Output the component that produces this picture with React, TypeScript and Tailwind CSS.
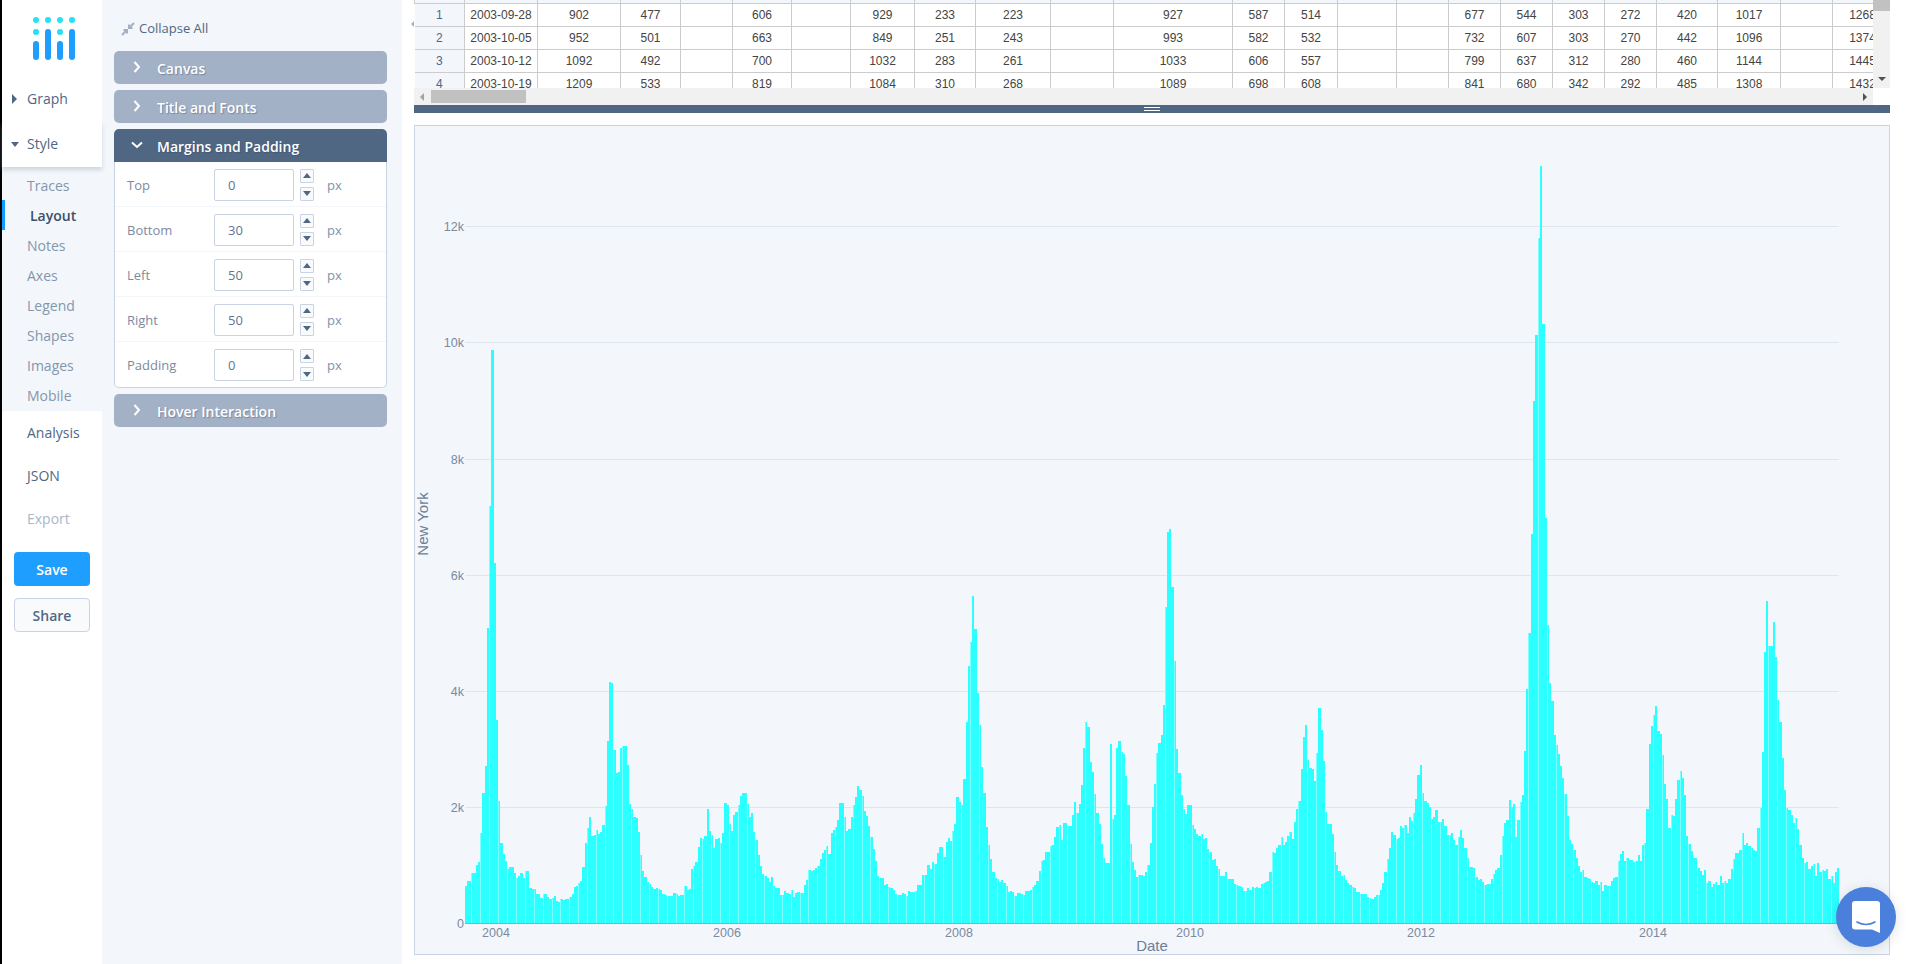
import React from "react";

const seg1 = [18,37,25,42,31,42,37,50,44,50,50,58,57,61,63,90,70,130,77,157,84,295,90.6,417,97.5,573,104.4,360,110,203,117,122,124,80,131,69,138,62,144,54,151,56,158,56,164,50,171,45,178,47,184,50,191,45,198,52,205,52,211,35,218,34,225,34,231,29,238,29,244,25,251,29,258,29,264,26,271,24,278,25,284,27,291,22,298,21,304,24,311,23,318,24,325,24,331,26,338,29,344,36,351,37,357,40,364,42,370,56,377,80,384,95,391,106,397,87,404,88,410,93,417,89,424,91,430,98,437,117,444,182,450,241,457,240,463,173,470,150,477,151,483,175,490,177,497,177,503,158,510,119,517,114,523,106,530,105,537,91,543,68,550,52,556,46,563,41,570,39,577,36,583,34,590,35,597,34,604,33,610,29,617,28,623,27,630,27,637,27,643,30,650,29,657,27,663,28,670,28,676,37,683,33,690,34,696,54,703,57,709,61,716,76,723,85,729,84,736,87,743,114,749,92,756,88,763,75,769,84,776,85,783,80,789,90,796,120,803,118,809,99,816,92,823,108,829,111,836,118,843,127,850,130,856,130,863,119,869,106,876,110,883,91,889,83,896,68,903,57,909,49,916,47,923,45,929,41,936,46,942,37,949,35,956,35,962,28,969,28,975,32,982,30,989,29,995,33,1002,26,1009,30,1015,31,1022,30,1029,30,1035,38,1042,43,1048,53,1055,52,1062,53,1068,55,1075,57,1082,64,1088,70,1095,73,1101,77,1108,69,1115,90,1121,93,1128,96,1135,103,1141,120,1148,120,1155,106,1161,92,1168,94,1175,106,1181,118,1188,126,1194,137,1201,133,1208,127,1215,112,1221,107,1228,97,1234,86,1241,74,1248,62,1254,47,1261,45,1268,45,1275,38,1281,39,1288,36,1294,35,1301,33,1308,29,1314,28,1321,28,1328,30,1334,29,1341,27,1348,32,1354,31,1361,31,1368,32,1375,38];
const seg2 = [62,38,69,48,76,48,86,58,92,54,99,61,107,59,114,70,120,76,127,76,133,66,140,81,147,85,153,82,158,92,165,99,173,126,180,121,187,118,193,144,200,201,207,257,213,281,219,327,226,294,233,230,240,198,247,156,253,130,260,96,266,78,273,64,280,51,287,45,293,44,300,41,307,43,313,40,320,37,326,31,333,32,340,31,346,27,353,30,360,30,366,29,373,28,378,32,385,32,392,33,398,36,405,38,411,42,420,52,425,62,432,63,438,71,445,71,452,77,458,78,465,86,472,96,479,98,485,83,492,100,499,100,505,97,512,97,519,108,525,121,532,110,539,119,545,138,551,175,558,201,565,196,572,161,578,151,585,129,592,110,599,99,605,79,612,65,618,60,625,60,632,179,638,104,645,108,651,175,658,182,665,171,672,169,678,147,685,118,692,79,698,61,705,53,711,46,718,48,725,48,732,47,738,51,745,58,752,80,758,116,765,139,771,170,778,180,785,188,791,218,798,316,804,391,811,394,817,336,824,262,830,174,838,150,845,128,852,114,858,109,865,118,871,118,878,98,885,94,891,89,898,87,905,89,911,84,918,85,924,74,931,71,938,63,944,64,951,57,958,54,964,47,971,47,978,51,984,44,991,44,998,44,1005,39,1011,38,1018,37,1025,36,1031,32,1038,32,1045,35,1051,33,1058,36,1065,35,1071,36,1078,35,1085,39,1091,40,1098,41,1105,42,1111,51,1118,71,1125,70,1131,75,1138,78,1145,86,1151,78,1158,81,1165,87,1171,91,1178,84,1185,101,1191,114,1198,122,1205,154,1211,186,1218,198,1225,163,1231,155,1238,154,1245,142,1251,170,1258,215,1265,193,1271,162,1278,111,1285,99,1291,99,1298,89,1305,71,1311,58,1318,52,1325,47,1331,48,1338,43,1345,40,1351,38,1358,36,1365,35,1371,31,1378,31];
const seg3 = [64,29,70,29,77,29,84,26,91,25,97,24,104,26,111,28,117,28,124,33,129,40,136,51,143,64,150,75,157,91,163,88,170,84,177,85,184,97,190,95,196,98,203,90,210,106,216,102,223,110,228,124,236,148,243,158,250,130,256,122,263,120,270,116,276,104,283,106,289,113,296,101,303,101,309,104,316,97,323,88,329,88,336,90,343,83,349,78,356,86,363,93,369,85,376,75,383,65,390,56,396,56,403,55,409,46,416,43,423,44,429,41,436,38,443,39,449,39,456,44,463,49,468,53,475,55,482,68,488,87,495,100,502,103,509,123,516,116,522,119,529,86,535,103,542,121,549,128,555,172,562,234,568,290,576,389,582,522,589,588,596,685,603,757,610,599,617,405,625,298,630,240,637,222,644,188,650,178,657,169,663,157,670,145,676,129,683,107,690,83,696,79,703,73,710,65,716,57,723,51,729,53,736,46,743,45,749,44,756,41,763,40,769,42,776,38,782,41,789,32,796,38,803,37,809,37,816,42,823,45,829,46,836,62,842,69,849,72,856,62,862,65,869,63,876,63,883,61,889,62,896,68,902,62,909,78,915,80,922,114,929,179,935,197,942,208,949,217,955,192,962,189,968,168,975,139,982,124,988,95,995,108,1002,107,1008,124,1015,143,1022,152,1029,145,1035,128,1042,87,1048,79,1055,72,1062,65,1069,65,1075,55,1082,52,1089,48,1095,53,1102,40,1108,42,1115,36,1122,39,1128,41,1135,38,1142,47,1148,40,1155,42,1162,40,1168,44,1175,54,1181,64,1188,70,1195,70,1201,73,1208,90,1215,78,1222,80,1228,77,1235,75,1242,73,1248,72,1255,95,1262,115,1268,171,1275,271,1281,322,1288,277,1295,277,1301,301,1308,266,1315,223,1321,201,1328,165,1335,133,1341,115,1348,113,1355,108,1361,100,1368,105,1375,94,1381,78,1388,65,1395,60,1401,61,1408,54,1415,57,1421,59,1428,47,1435,60,1441,51,1448,53,1455,52,1461,54,1468,44,1475,47,1481,40,1488,51,1494,55];

const points: { x: number; h: number }[] = [];
const addSeg = (origin: number, s: number[]) => {
  for (let i = 0; i < s.length; i += 2) points.push({ x: origin + s[i] / 3, h: s[i + 1] });
};
addSeg(460, seg1);
addSeg(900, seg2);
addSeg(1340, seg3);

const BASE = 923;
const bars = points.map((p, i) => {
  const l = i === 0 ? 465 : Math.round((points[i - 1].x + p.x) / 2);
  const r = i === points.length - 1 ? 1839 : Math.round((p.x + points[i + 1].x) / 2);
  return { l, r, h: p.h };
});

const yTicks = [
  { y: 923.5, t: "0" },
  { y: 807.5, t: "2k" },
  { y: 691.5, t: "4k" },
  { y: 575.5, t: "6k" },
  { y: 459.5, t: "8k" },
  { y: 342.5, t: "10k" },
  { y: 226.5, t: "12k" },
];
const xTicks = [
  { x: 496, t: "2004" },
  { x: 727, t: "2006" },
  { x: 959, t: "2008" },
  { x: 1190, t: "2010" },
  { x: 1421, t: "2012" },
  { x: 1653, t: "2014" },
];

const colWidths = [50, 73, 83, 60, 52, 59, 59, 64, 61, 75, 63, 119, 52, 53, 59, 52, 52, 52, 52, 52, 61, 63, 52, 60];
const rows = [
  ["1", "2003-09-28", "902", "477", "", "606", "", "929", "233", "223", "", "927", "587", "514", "", "", "677", "544", "303", "272", "420", "1017", "", "1268"],
  ["2", "2003-10-05", "952", "501", "", "663", "", "849", "251", "243", "", "993", "582", "532", "", "", "732", "607", "303", "270", "442", "1096", "", "1374"],
  ["3", "2003-10-12", "1092", "492", "", "700", "", "1032", "283", "261", "", "1033", "606", "557", "", "", "799", "637", "312", "280", "460", "1144", "", "1445"],
  ["4", "2003-10-19", "1209", "533", "", "819", "", "1084", "310", "268", "", "1089", "698", "608", "", "", "841", "680", "342", "292", "485", "1308", "", "1432"],
];

function Logo() {
  return (
    <svg width="48" height="48" viewBox="0 0 48 48" className="block">
      <g fill="#25e0f8">
        <circle cx="6" cy="6" r="3" />
        <circle cx="18" cy="6" r="3" />
        <circle cx="30" cy="6" r="3" />
        <circle cx="42" cy="6" r="3" />
        <circle cx="6" cy="18" r="3" />
        <circle cx="30" cy="18" r="3" />
      </g>
      <g fill="#1e9fff">
        <rect x="3" y="27" width="6" height="19" rx="3" />
        <rect x="15" y="15" width="6" height="31" rx="3" />
        <rect x="27" y="27" width="6" height="19" rx="3" />
        <rect x="39" y="15" width="6" height="31" rx="3" />
      </g>
    </svg>
  );
}

function Chevron({ open }: { open?: boolean }) {
  return (
    <svg width="12" height="12" viewBox="0 0 12 12" className="block">
      <path
        d={open ? "M1 3.5 L6 8 L11 3.5" : "M3.5 1 L8 6 L3.5 11"}
        fill="none"
        stroke="#ffffff"
        strokeWidth="2"
      />
    </svg>
  );
}

function FoldHeader({ label, open }: { label: string; open?: boolean }) {
  return (
    <div
      className={
        open
          ? "flex h-[33px] items-center rounded-t-[5px] bg-[#506784] pl-[17px]"
          : "flex h-[33px] items-center rounded-[5px] bg-[#a2b1c6] pl-[17px]"
      }
    >
      <span className="-mt-[2px] w-[26px]">
        <Chevron open={open} />
      </span>
      <span className="pt-[2px] text-[14px] font-semibold text-white [text-shadow:1px_1px_1px_rgba(40,60,90,0.35)]">{label}</span>
    </div>
  );
}

function MarginRow({ label, value, last }: { label: string; value: string; last?: boolean }) {
  return (
    <div className={last ? "flex h-[45px] items-center pl-[12px] pt-[1px]" : "flex h-[45px] items-center border-b border-[#f3f6fa] pl-[12px] pt-[1px]"}>
      <span className="mt-[2px] w-[87px] text-[13px] text-[#7d8ba0]">{label}</span>
      <div className="flex h-[32px] w-[80px] items-center rounded-[2px] border border-[#c8d4e3] bg-white pl-[13px] pt-[2px] text-[13px] text-[#5f7590]">
        {value}
      </div>
      <div className="ml-[6px] flex h-[32px] w-[14px] flex-col justify-between">
        <div className="flex h-[14px] items-center justify-center rounded-[1px] border border-[#c8d4e3] bg-[#f8fafc]">
          <div className="h-0 w-0 border-x-[4px] border-b-[5px] border-x-transparent border-b-[#506784]" />
        </div>
        <div className="flex h-[14px] items-center justify-center rounded-[1px] border border-[#c8d4e3] bg-[#f8fafc]">
          <div className="h-0 w-0 border-x-[4px] border-t-[5px] border-x-transparent border-t-[#506784]" />
        </div>
      </div>
      <span className="ml-[13px] mt-[2px] text-[13px] text-[#7d93ab]">px</span>
    </div>
  );
}

function SubItem({ label, active }: { label: string; active?: boolean }) {
  return active ? (
    <div className="flex h-[30px] items-center border-l-[3px] border-[#119dff] pl-[25px] text-[14px] font-semibold text-[#3b5068]">{label}</div>
  ) : (
    <div className="flex h-[30px] items-center pl-[25px] text-[14px] text-[#8496ac]">{label}</div>
  );
}

export default function App() {
  return (
    <div className="relative flex h-[964px] w-[1906px] overflow-hidden bg-white font-['Open_Sans',sans-serif]">
      <div className="w-[2px] shrink-0 bg-black" />

      <nav className="flex w-[100px] shrink-0 flex-col bg-white">
        <div className="h-[77px] pl-[28px] pt-[14px]">
          <Logo />
        </div>
        <div className="flex h-[45px] items-center pb-[2px] pl-[10px] text-[14px] text-[#506784]">
          <div className="mr-[10px] h-0 w-0 border-y-[5px] border-l-[5px] border-y-transparent border-l-[#506784]" />
          Graph
        </div>
        <div className="relative z-10 flex h-[45px] items-center pb-[2px] pl-[9px] text-[14px] text-[#506784] shadow-[0_3px_4px_rgba(160,175,195,0.45)]">
          <div className="mr-[8px] mt-[1px] h-0 w-0 border-x-[4.5px] border-t-[5px] border-x-transparent border-t-[#506784]" />
          Style
        </div>
        <div className="flex h-[244px] flex-col bg-[#f3f6fa] pt-[3px]">
          <SubItem label="Traces" />
          <SubItem label="Layout" active />
          <SubItem label="Notes" />
          <SubItem label="Axes" />
          <SubItem label="Legend" />
          <SubItem label="Shapes" />
          <SubItem label="Images" />
          <SubItem label="Mobile" />
        </div>
        <div className="flex h-[43px] items-center pl-[25px] text-[14px] text-[#506784]">Analysis</div>
        <div className="flex h-[43px] items-center pl-[25px] text-[14px] text-[#506784]">JSON</div>
        <div className="flex h-[43px] items-center pl-[25px] text-[14px] text-[#a9b7ca]">Export</div>
        <div className="mx-[12px] mt-[12px] flex h-[34px] w-[76px] items-center justify-center rounded-[4px] bg-[#1e9fff] text-[14px] font-semibold text-white">Save</div>
        <div className="mx-[12px] mt-[12px] flex h-[34px] w-[76px] items-center justify-center rounded-[4px] border border-[#c8d4e3] bg-[#f8fafc] text-[14px] font-semibold text-[#506784]">Share</div>
      </nav>

      <aside className="w-[300px] shrink-0 bg-[#f3f6fa] pl-[12px] pr-[15px]">
        <div className="flex h-[51px] items-center pl-[7px] pt-[6px] text-[13px] text-[#506784]">
          <svg width="14" height="14" viewBox="0 0 14 14" className="mr-[4px]">
            <path d="M13 1 L8.5 5.5 M8 2.5 V6 H11.5 M1 13 L5.5 8.5 M6 11.5 V8 H2.5" fill="none" stroke="#a2b1c6" strokeWidth="2" />
          </svg>
          Collapse All
        </div>
        <div className="flex flex-col gap-[6px]">
          <FoldHeader label="Canvas" />
          <FoldHeader label="Title and Fonts" />
          <div>
            <FoldHeader label="Margins and Padding" open />
            <div className="rounded-b-[5px] border border-t-0 border-[#c8d4e3] bg-white">
              <MarginRow label="Top" value="0" />
              <MarginRow label="Bottom" value="30" />
              <MarginRow label="Left" value="50" />
              <MarginRow label="Right" value="50" />
              <MarginRow label="Padding" value="0" last />
            </div>
          </div>
          <FoldHeader label="Hover Interaction" />
        </div>
      </aside>

      <main className="flex min-w-0 flex-1 flex-col pl-[12px] pr-[16px]">
        <div className="flex h-[105px] shrink-0">
          <div className="flex w-[1459px] shrink-0 flex-col">
            <div className="h-[88px] overflow-hidden">
              <table className="w-[1478px] table-fixed border-collapse font-['Liberation_Sans',sans-serif] text-[12px] text-[#444444]">
                <colgroup>
                  {colWidths.map((w, i) => (
                    <col key={i} style={{ width: w }} />
                  ))}
                </colgroup>
                <tbody>
                  <tr className="h-[3px] bg-[#f3f6fa]">
                    {colWidths.map((_, i) => (
                      <td key={i} className="border border-t-0 border-[#cccccc] p-0" />
                    ))}
                  </tr>
                  {rows.map((r) => (
                    <tr key={r[0]} className="h-[23px]">
                      {r.map((c, i) => (
                        <td
                          key={i}
                          className={
                            i === 0
                              ? "overflow-hidden border border-l-0 border-[#cccccc] bg-[#f3f6fa] p-0 text-center text-[#506784]"
                              : "overflow-hidden border border-[#cccccc] p-0 text-center"
                          }
                        >
                          {c}
                        </td>
                      ))}
                    </tr>
                  ))}
                </tbody>
              </table>
            </div>
            <div className="flex h-[17px] items-center bg-[#f1f1f1] pl-[6px]">
              <div className="h-0 w-0 border-y-[4px] border-r-[4px] border-y-transparent border-r-[#a3a3a3]" />
              <div className="ml-[7px] h-[13px] w-[95px] bg-[#c1c1c1]" />
              <div className="ml-auto mr-[6px] h-0 w-0 border-y-[4px] border-l-[4px] border-y-transparent border-l-[#505050]" />
            </div>
          </div>
          <div className="flex w-[17px] shrink-0 flex-col">
            <div className="relative h-[88px] bg-[#f1f1f1]">
              <div className="h-[11px] bg-[#c1c1c1]" />
              <div className="absolute bottom-[7px] left-[5px] h-0 w-0 border-x-[4px] border-t-[4px] border-x-transparent border-t-[#505050]" />
            </div>
          </div>
        </div>

        <div className="flex h-[8px] shrink-0 flex-col items-center justify-center gap-[1.5px] bg-[#506784]">
          <div className="h-px w-[16px] bg-white" />
          <div className="h-px w-[16px] bg-white" />
        </div>

        <div className="mt-[12px] h-[830px] shrink-0 border border-[#c8d4e3] bg-[#f3f6fb]">
          <svg width="1474" height="828" viewBox="415 126 1474 828" className="block">
            {yTicks.slice(1).map((t) => (
              <line key={t.t} x1="465" x2="1839" y1={t.y} y2={t.y} stroke="#dfe5ee" strokeWidth="1" />
            ))}
            <g shapeRendering="crispEdges">
              {bars.map((b, i) => (
                <rect key={i} x={b.l} y={BASE - b.h} width={b.r - b.l} height={b.h} fill="#2bffff" />
              ))}
              {bars.map((b, i) =>
                i % 4 === 3 ? <rect key={i} x={b.l} y={BASE - b.h} width={1} height={b.h} fill="#7dffff" /> : null
              )}
              <rect x="465" y="923" width="1374" height="1" fill="#2ed6da" />
            </g>
            <g fontFamily="'Liberation Sans', sans-serif" fontSize="12.5" fill="#7a8aa0">
              {yTicks.map((t) => (
                <text key={t.t} x="464" y={t.y + 4.5} textAnchor="end">
                  {t.t}
                </text>
              ))}
              {xTicks.map((t) => (
                <text key={t.t} x={t.x} y="937" textAnchor="middle">
                  {t.t}
                </text>
              ))}
            </g>
            <text x="1152" y="951" textAnchor="middle" fontFamily="'Liberation Sans', sans-serif" fontSize="15" fill="#6c7f97">
              Date
            </text>
            <text
              transform="translate(428 524) rotate(-90)"
              textAnchor="middle"
              fontFamily="'Liberation Sans', sans-serif"
              fontSize="15"
              fill="#6c7f97"
            >
              New York
            </text>
          </svg>
        </div>
      </main>

      <div className="absolute left-[411px] top-[21px] h-0 w-0 border-y-[3px] border-r-[3px] border-y-transparent border-r-[#a2b1c6]" />

      <div className="absolute left-[1836px] top-[887px] flex h-[60px] w-[60px] items-center justify-center rounded-full bg-[#4a7fdb] shadow-[0_2px_14px_rgba(0,0,0,0.12)]">
        <svg width="30" height="34" viewBox="0 0 30 34">
          <path d="M4 1 H26 A3 3 0 0 1 29 4 V33 L21 29.5 H4 A3 3 0 0 1 1 26.5 V4 A3 3 0 0 1 4 1 Z" fill="#ffffff" />
          <path d="M6 22 Q15 27 24 22" fill="none" stroke="#4a7fdb" strokeWidth="1.6" strokeLinecap="round" />
        </svg>
      </div>
    </div>
  );
}
